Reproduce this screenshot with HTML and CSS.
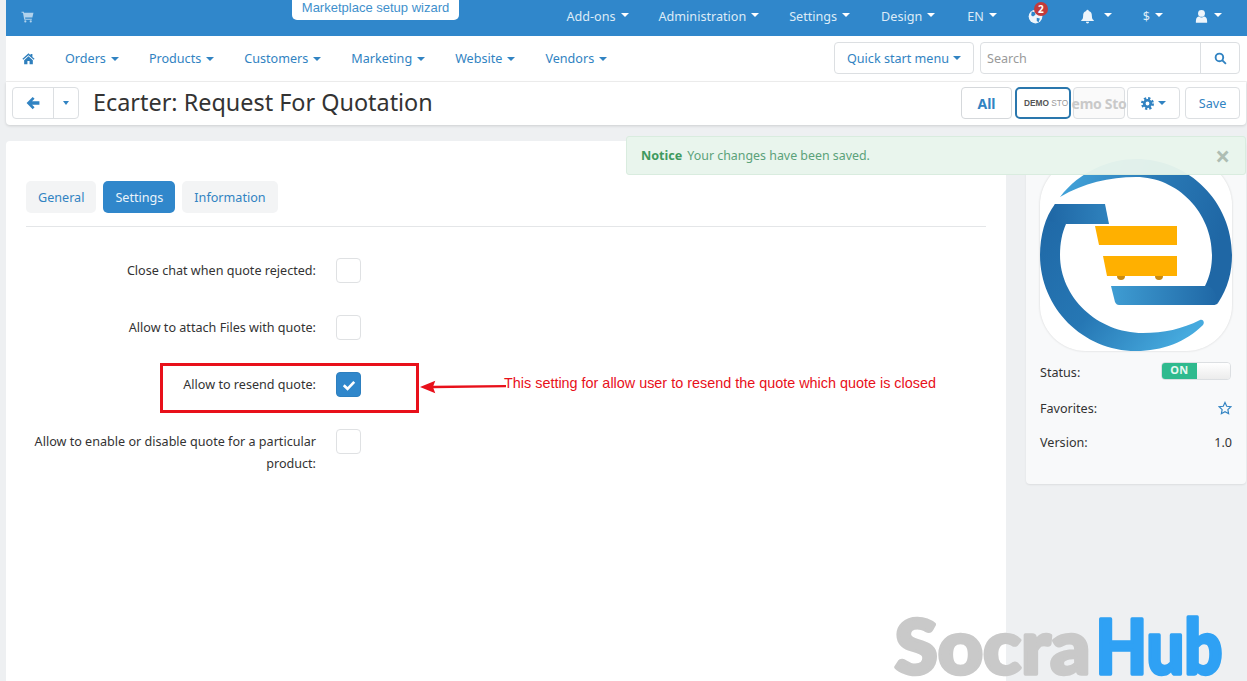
FILE: index.html
```html
<!DOCTYPE html>
<html lang="en">
<head>
<meta charset="utf-8">
<title>Ecarter: Request For Quotation</title>
<link rel="stylesheet" href="styles.css">
</head>
<body>
<svg class="defs" width="0" height="0">
  <defs>
    <linearGradient id="gTop" x1="0" y1="0" x2="1" y2="0.3"><stop offset="0" stop-color="#45a8de"/><stop offset="0.55" stop-color="#2a7ab6"/><stop offset="1" stop-color="#1f67a5"/></linearGradient>
    <linearGradient id="gLeft" x1="0" y1="0" x2="1" y2="0.75"><stop offset="0" stop-color="#1f67a5"/><stop offset="0.55" stop-color="#2677b4"/><stop offset="1" stop-color="#46aade"/></linearGradient>
    <linearGradient id="gBar" x1="0" y1="0" x2="1" y2="0"><stop offset="0" stop-color="#3f9dd3"/><stop offset="1" stop-color="#1f67a5"/></linearGradient>
    <linearGradient id="gBar2" x1="0" y1="0" x2="1" y2="0"><stop offset="0" stop-color="#1f67a5"/><stop offset="1" stop-color="#2f82bd"/></linearGradient>
  </defs>
</svg>
<header class="topbar">
  <svg class="ico cart" viewBox="0 0 24 24"><path d="M1 3h4l.6 2H23l-2 9H7.500l.4 2H20v2H6L3.600 5H1z"/><circle cx="8" cy="21" r="2"/><circle cx="18" cy="21" r="2"/></svg>
  <nav class="topnav">
    <a class="ti ti-addons">Add-ons<i class="caret"></i></a>
    <a class="ti ti-admin">Administration<i class="caret"></i></a>
    <a class="ti ti-settings">Settings<i class="caret"></i></a>
    <a class="ti ti-design">Design<i class="caret"></i></a>
    <a class="ti ti-en">EN<i class="caret"></i></a>
    <span class="ti ti-globe">
      <svg class="ico globe" viewBox="0 0 24 24"><circle cx="12" cy="12" r="11"/><path class="globe-cut" d="M6 4l5 1 1 4-4 3-3-2zM14 14l5 1-2 6-3-2z"/></svg>
      <b class="badge">2</b>
    </span>
    <a class="ti ti-bell"><svg class="ico bell" viewBox="0 0 24 24"><path d="M12 1a2 2 0 0 1 2 2c4 1 5 4 5 8 0 5 2 6 3 7v1H2v-1c1-1 3-2 3-7 0-4 1-7 5-8a2 2 0 0 1 2-2z"/><path d="M9.500 20.500a2.500 2.500 0 0 0 5 0z"/></svg><i class="caret"></i></a>
    <a class="ti ti-cur">$<i class="caret"></i></a>
    <a class="ti ti-user"><svg class="ico user" viewBox="0 0 24 24"><circle cx="12" cy="7" r="5.500"/><path d="M3 22v-3c0-5 3-7 5-7 1 1 2.500 1.500 4 1.500s3-.5 4-1.500c2 0 5 2 5 7v3z"/></svg><i class="caret"></i></a>
  </nav>
</header>
<a class="wizard">Marketplace setup wizard</a>

<section class="navrow">
  <svg class="ico home" viewBox="0 0 24 24"><path d="M12 2.500L.8 12.600l1.500 1.700L12 5.800l9.700 8.500 1.500-1.700-4-3.600V3.500h-3.500v2.500z"/><path d="M4 15v7.500h6v-6h4v6h6V15l-8-7z"/></svg>
  <a class="ni ni-orders">Orders<i class="caret"></i></a>
  <a class="ni ni-products">Products<i class="caret"></i></a>
  <a class="ni ni-customers">Customers<i class="caret"></i></a>
  <a class="ni ni-marketing">Marketing<i class="caret"></i></a>
  <a class="ni ni-website">Website<i class="caret"></i></a>
  <a class="ni ni-vendors">Vendors<i class="caret"></i></a>
  <a class="btn quick">Quick start menu<i class="caret"></i></a>
  <div class="search">
    <input class="search-input" type="text" placeholder="Search">
    <span class="search-btn"><svg class="ico searchi" viewBox="0 0 24 24"><circle cx="10" cy="10" r="7"/><path d="M15 15l7 7"/></svg></span>
  </div>
</section>

<section class="titlerow">
  <div class="backgroup">
    <span class="back"><svg class="ico arrow" viewBox="0 0 24 24"><path d="M11.500 1.500L1 12l10.500 10.500 3.200-3.200L10.400 15H23V9H10.400l4.300-4.300z"/></svg></span>
    <span class="backcaret"><i class="caret"></i></span>
  </div>
  <h1 class="title">Ecarter: Request For Quotation</h1>
  <div class="actions">
    <a class="btn act-all">All</a>
    <a class="btn act-demo"><span class="demo-text"><b>DEMO</b> STO</span></a>
    <a class="btn act-store"><span class="store-text">emo Sto</span></a>
    <a class="btn act-gear"><svg class="ico gear" viewBox="0 0 24 24"><circle class="gear-teeth" cx="12" cy="12" r="9.500"/><circle class="gear-ring" cx="12" cy="12" r="6"/></svg><i class="caret"></i></a>
    <a class="btn act-save">Save</a>
  </div>
</section>

<main class="content">
  <section class="panel">
    <div class="tabs">
      <a class="tab">General</a>
      <a class="tab tab-active">Settings</a>
      <a class="tab">Information</a>
    </div>
    <div class="rows">
      <div class="row"><label class="lab">Close chat when quote rejected:</label><span class="cb"></span></div>
      <div class="row"><label class="lab">Allow to attach Files with quote:</label><span class="cb"></span></div>
      <div class="row"><label class="lab">Allow to resend quote:</label><span class="cb cb-on"><svg class="check" viewBox="0 0 24 24"><path d="M3 12.500l6.500 6L21 6.500"/></svg></span></div>
      <div class="row"><label class="lab">Allow to enable or disable quote for a particular product:</label><span class="cb"></span></div>
    </div>
  </section>
  <aside class="side">
    <svg class="logo" viewBox="0 0 192 192">
      <rect width="192" height="192" rx="46" fill="#fff"/>
      <path fill="url(#gTop)" d="M20 38C40 12 70 0 96 0c53 0 96 43 96 96 0 17-4 33-14 48l-13-17c5-10 7-20 7-31 0-42-34-78-76-78-27 0-52 6-76 20z"/>
      <path fill="url(#gBar)" d="M71 127h94c3 0 10 0 13 17-1 1.500-3 2-5 2H79c-2 0-3-1-4-3z"/>
      <path fill="url(#gLeft)" d="M15 45C5 58 0 77 0 96c0 53 43 96 96 96 26 0 50-9 67-26 2-3 0-6-3-5-18 9-36 13-57 13-46 0-83-36-83-78 0-12 2-22 6-31z"/>
      <path fill="url(#gBar2)" d="M15 45h50l4 20H26L9 62z"/>
      <circle cx="81" cy="117" r="4" fill="#c98a10"/><circle cx="119" cy="117" r="4" fill="#c98a10"/>
      <path fill="#ffb000" d="M55 67h82v19H59zM63 97h74v20H67z"/>
    </svg>
    <div class="info info-status"><span>Status:</span><span class="toggle"><b class="toggle-on">ON</b><i class="toggle-off"></i></span></div>
    <div class="info info-fav"><span>Favorites:</span><svg class="star" viewBox="0 0 24 24"><path d="M12 2.500l3 6.500 7 .9-5.100 4.900 1.300 7-6.200-3.500-6.200 3.500 1.300-7L2 9.900 9 9z"/></svg></div>
    <div class="info info-ver"><span>Version:</span><span>1.0</span></div>
  </aside>
</main>

<div class="notice"><b class="notice-h">Notice</b><span class="notice-t">Your changes have been saved.</span><span class="notice-x">×</span></div>

<div class="redbox"></div>
<svg class="redarrow" viewBox="0 0 90 14"><path d="M0 7L16 .5 14 5.800 90 5v2.200L14 8.400 16 13.500z"/></svg>
<p class="redtext">This setting for allow user to resend the quote which quote is closed</p>
<svg class="mark" viewBox="0 0 340 75">
  <text class="mark-a" x="4.500" y="67.500" textLength="196" lengthAdjust="spacingAndGlyphs">Socra</text>
  <text class="mark-b" x="205.500" y="67.500" textLength="127" lengthAdjust="spacingAndGlyphs">Hub</text>
</svg>
</body>
</html>
```
FILE: styles.css
```css
* { box-sizing: border-box; }
html, body { margin: 0; height: 681px; overflow: hidden; }
body {
  position: relative;
  background: #eef0f2;
  padding-left: 6px;
  font-family: "Noto Sans", "Open Sans", sans-serif;
  font-size: 12.600px;
  color: #333;
}
a { text-decoration: none; color: inherit; }
.defs { position: absolute; }
.ico { display: block; fill: currentColor; flex: none; }
.caret {
  display: inline-block;
  width: 0; height: 0;
  margin-left: 5px;
  border-left: 4px solid transparent;
  border-right: 4px solid transparent;
  border-top: 4px solid currentColor;
  vertical-align: 2px;
}

/* top bar */
.topbar {
  height: 36px;
  background: #3087cb;
  color: #dcebf7;
  display: flex;
  align-items: center;
  padding-left: 15px;
}
.cart { width: 13px; height: 13px; margin-top: -3px; opacity: .75; }
.topnav { margin-left: auto; display: flex; align-items: center; height: 100%; padding-right: 25px; }
.ti { display: flex; align-items: center; white-space: nowrap; margin-top: -4px; height: 24px; position: relative; }
.ti .caret { color: #fff; margin-top: -3px; }
.ti-addons { margin-right: 30px; }
.ti-admin { margin-right: 30px; }
.ti-settings { margin-right: 31px; }
.ti-design { margin-right: 32px; }
.ti-en { margin-right: 31px; }
.ti-globe { margin-right: 37px; width: 15px; }
.ti-bell { margin-right: 31px; }
.ti-cur { margin-right: 31px; }
.globe { width: 15px; height: 15px; fill: #eef5fb; }
.globe-cut { fill: #3087cb; }
.badge {
  position: absolute;
  left: 6px; top: -2px;
  width: 14px; height: 14px;
  border-radius: 50%;
  background: #c23b3b;
  color: #fff;
  font-size: 10px;
  line-height: 14px;
  text-align: center;
}
.bell { width: 15px; height: 15px; color: #eef5fb; }
.user { width: 15px; height: 15px; color: #eef5fb; }
.ti-bell .caret { margin-left: 9px; }
.ti-user .caret { margin-left: 5px; }
.wizard {
  position: absolute;
  left: 292px; top: 0;
  width: 167px; height: 20px;
  background: #fff;
  border-radius: 0 0 5px 5px;
  color: #3f90cc;
  font-family: "Liberation Sans", sans-serif;
  font-size: 13px;
  line-height: 15px;
  text-align: center;
}

/* nav row */
.navrow {
  height: 46px;
  background: #fff;
  border-bottom: 1px solid #f0f0f0;
  display: flex;
  align-items: center;
  color: #3183c2;
  padding: 0 7px 0 16px;
}
.home { width: 13px; height: 13px; color: #2f7fbd; margin-right: 30px; }
.ni { white-space: nowrap; margin-right: 30px; }
.ni .caret { color: #3183c2; vertical-align: 2px; }
.btn {
  display: flex;
  align-items: center;
  justify-content: center;
  height: 32px;
  background: #fff;
  border: 1px solid #dcdfe2;
  border-radius: 4px;
  color: #3183c2;
  white-space: nowrap;
}
.quick { width: 140px; margin-left: auto; align-self: flex-start; margin-top: 6px; }
.quick .caret { margin-left: 4px; }
.search { width: 260px; height: 32px; margin-left: 6px; align-self: flex-start; margin-top: 6px; display: flex; border: 1px solid #dcdfe2; border-radius: 4px; }
.search-input { flex: 1; min-width: 0; border: 0; padding: 0 6px; background: transparent; font: inherit; outline: 0; }
.search-input::placeholder { color: #9a9a9a; opacity: 1; }
.search-btn { width: 39px; border-left: 1px solid #dcdfe2; display: flex; align-items: center; justify-content: center; }
.searchi { width: 13px; height: 13px; fill: none; stroke: #3183c2; stroke-width: 3.500; }

/* title row */
.titlerow {
  height: 43px;
  background: #fff;
  border-radius: 0 0 4px 4px;
  box-shadow: 0 1px 3px rgba(0,0,0,.14);
  display: flex;
  align-items: flex-start;
  padding: 5px 6px 0 6px;
  margin-right: 1px;
}
.backgroup { display: flex; width: 67px; height: 32px; border: 1px solid #dcdfe2; border-radius: 4px; color: #3183c2; }
.back { width: 41px; border-right: 1px solid #dcdfe2; display: flex; align-items: center; justify-content: center; }
.arrow { width: 14px; height: 14px; }
.backcaret { flex: 1; display: flex; align-items: center; justify-content: center; }
.backcaret .caret { margin: 0; border-left-width: 3.500px; border-right-width: 3.500px; }
.title { margin: 0 0 0 14px; font-size: 23.400px; font-weight: 400; line-height: 30px; color: #333; white-space: nowrap; }
.actions { margin-left: auto; display: flex; }
.act-all { width: 51px; font-weight: 700; font-size: 14px; border-color: #d5d8db; }
.act-demo { width: 56px; margin-left: 3px; border: 2px solid #2a77ad; border-radius: 5px; overflow: hidden; justify-content: flex-start; padding-left: 7px; }
.demo-text { font-size: 8.300px; color: #9a9a9a; font-family: "Liberation Sans", sans-serif; }
.demo-text b { color: #555; }
.act-store { width: 52px; margin-left: 2px; color: #c9c9c9; font-weight: 700; font-size: 14px; letter-spacing: -.3px; background: #fafafa; }
.act-gear { width: 53px; margin-left: 2px; }
.gear { width: 13px; height: 13px; }
.gear-teeth { fill: none; stroke: #3183c2; stroke-width: 5; stroke-dasharray: 4 3.460; }
.gear-ring { fill: none; stroke: #3183c2; stroke-width: 5; }
.act-gear .caret { margin-left: 4px; }
.act-save { width: 55px; margin-left: 5px; }

/* content */
.content { display: flex; align-items: flex-start; margin-top: 16px; height: 560px; }
.panel { width: 1000px; height: 100%; background: #fff; border-radius: 4px 4px 0 0; padding: 40px 20px 0; }
.tabs { display: flex; gap: 7px; height: 46px; border-bottom: 1px solid #e4e6e8; width: 960px; }
.tab { height: 32px; padding: 0 12px; line-height: 33px; background: #f3f4f5; border-radius: 5px; color: #3183c2; font-size: 12.600px; }
.tab-active { background: #3087cb; color: #eaf3fa; }
.rows { margin-top: 31px; }
.row { display: flex; gap: 20px; height: 57px; }
.lab { width: 290px; text-align: right; line-height: 22px; padding-top: 2px; }
.cb { width: 25px; height: 25px; background: #fff; border: 1px solid #dfe1e3; border-radius: 4px; flex: none; }
.cb-on { background: #3087cb; border-color: #2d7fbf; display: flex; align-items: center; justify-content: center; }
.check { width: 14px; height: 14px; fill: none; stroke: #fff; stroke-width: 4.500; }

/* sidebar */
.side { width: 220px; height: 343px; margin-left: 20px; padding: 18px 14px 0; background: #f8f9fa; border-radius: 4px; box-shadow: 0 1px 2px rgba(0,0,0,.08); }
.logo { display: block; width: 192px; height: 192px; filter: drop-shadow(0 0 1px rgba(0,0,0,.15)); }
.info { display: flex; justify-content: space-between; align-items: center; height: 20px; }
.info-status { margin-top: 11px; }
.info-fav { margin-top: 16px; }
.info-ver { margin-top: 14px; }
.toggle { display: flex; width: 70px; height: 18px; margin: -2px 1px 0 0; border-radius: 4px; overflow: hidden; border: 1px solid #dcdfe2; }
.toggle-on { width: 35px; background: #2fba8e; color: #e8f8f2; font-size: 11px; line-height: 14px; text-align: center; letter-spacing: .5px; }
.toggle-off { flex: 1; background: linear-gradient(#fff, #ececec); }
.star { width: 14px; height: 14px; fill: none; stroke: #3183c2; stroke-width: 2; }

/* notice */
.notice {
  position: absolute;
  left: 626px; top: 136px;
  width: 620px; height: 39px;
  display: flex;
  align-items: center;
  padding: 0 15px 0 14px;
  background: rgba(232,245,236,.96);
  border: 1px solid #d9ecdf;
  border-radius: 3px;
}
.notice-h { color: #3f9a5f; }
.notice-t { margin-left: 5px; color: #5ba27a; font-size: 12.400px; }
.notice-x { margin-left: auto; color: #aebdb3; font-size: 26px; font-weight: 700; line-height: 1; }

/* annotation */
.redbox { position: absolute; left: 160px; top: 363px; width: 259px; height: 50px; border: 3px solid #e8101a; }
.redarrow { position: absolute; left: 420px; top: 380px; width: 86px; height: 14px; fill: #e8101a; }
.redtext { position: absolute; left: 504px; top: 375px; margin: 0; font-family: "Liberation Sans", sans-serif; font-size: 14.400px; line-height: 16px; color: #e8101a; white-space: nowrap; }

/* watermark */
.mark { position: absolute; left: 890px; top: 606px; width: 340px; height: 75px; overflow: visible; }
.mark text { font-family: "Lato", sans-serif; font-weight: 900; font-size: 76px; stroke-width: 3.500; stroke-linejoin: round; }
.mark-a { fill: #c9c9c9; stroke: #c9c9c9; }
.mark-b { fill: #2fa1f4; stroke: #2fa1f4; }
```
